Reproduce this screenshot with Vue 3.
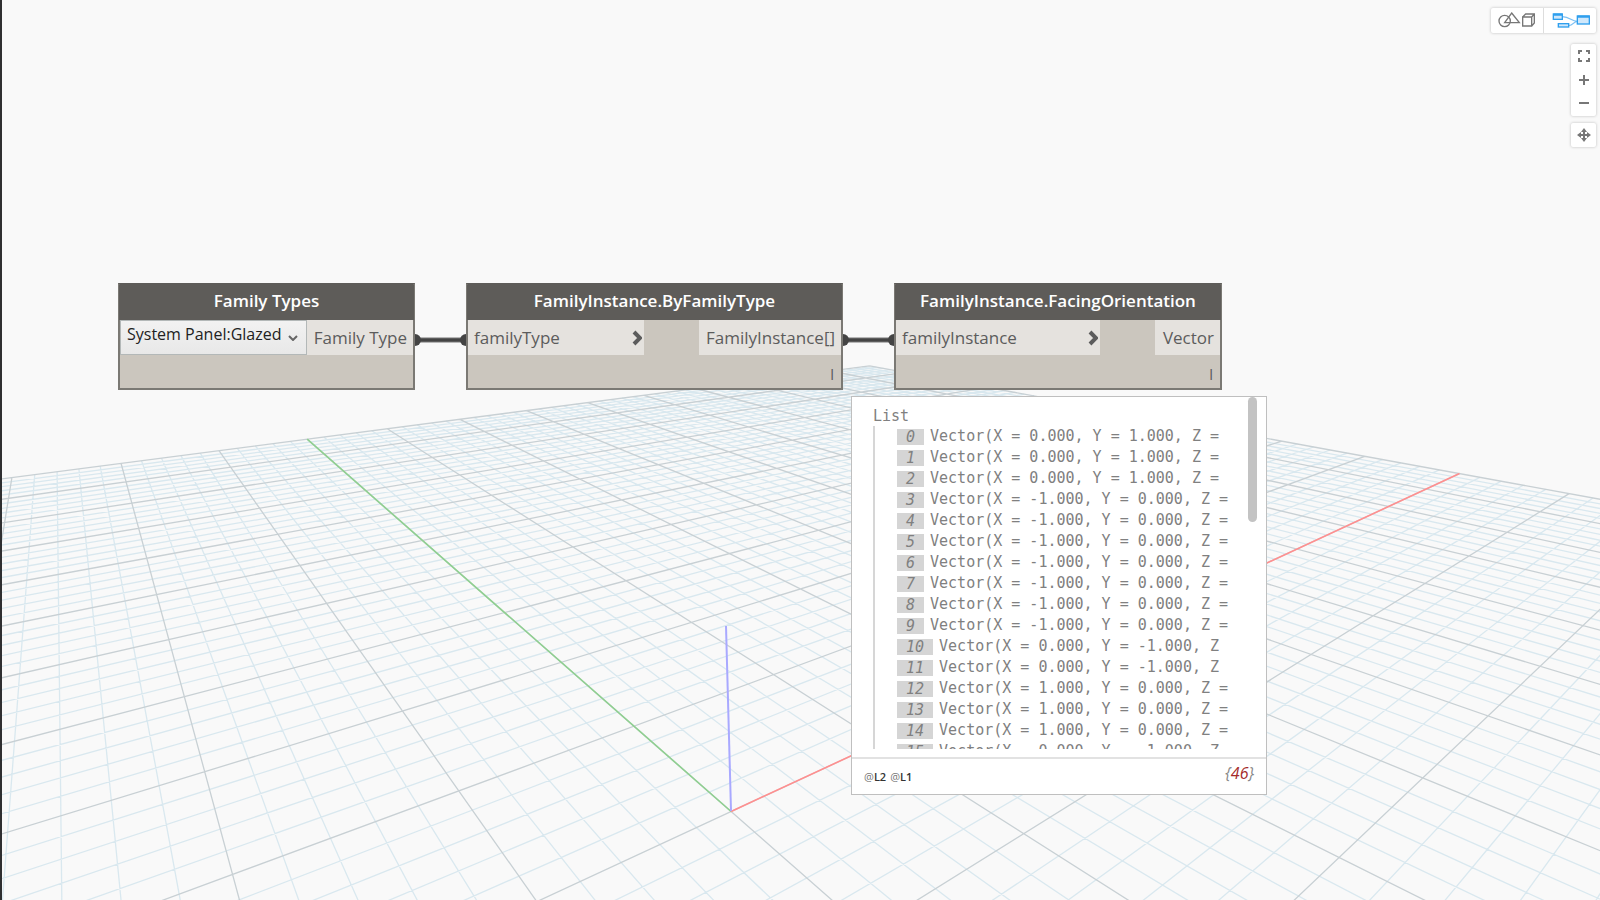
<script setup>
import { ref } from 'vue'

const familyType = ref('System Panel:Glazed')

// Perspective projection of the ground plane: (u, v) = 1 is the far end of each axis.
const cam = {
  a: 2649.5, b: 90.9, c: 731.1,
  d: 285.5, e: 363.7, f: 811.5,
  g: 1.3163, h: 1.6758
}
const NEAR = 0.1
const depth = (u, v) => cam.g * u + cam.h * v + 1

function project(u, v) {
  const w = depth(u, v)
  const x = (cam.a * u + cam.b * v + cam.c) / w
  const y = (cam.d * u + cam.e * v + cam.f) / w
  return x.toFixed(1) + ' ' + y.toFixed(1)
}

function segment(u0, v0, u1, v1) {
  const w0 = depth(u0, v0)
  const w1 = depth(u1, v1)
  if (w0 < NEAR && w1 < NEAR) return ''
  const t = (NEAR - w0) / (w1 - w0)
  const um = u0 + (u1 - u0) * t
  const vm = v0 + (v1 - v0) * t
  if (w0 < NEAR) { u0 = um; v0 = vm }
  if (w1 < NEAR) { u1 = um; v1 = vm }
  return 'M' + project(u0, v0) + 'L' + project(u1, v1)
}

let minor = ''
let major = ''
for (let i = -50; i <= 50; i++) {
  const k = i / 50
  const pair = segment(k, -1, k, 1) + segment(-1, k, 1, k)
  if (i % 5 === 0) major += pair
  else minor += pair
}

const axes = [
  { name: 'green', d: segment(0, 0, 0, 1) },
  { name: 'red', d: segment(0, 0, 1, 0) },
  { name: 'blue', d: 'M731 811L726 626' }
]

const nodes = [
  { title: 'Family Types', x: 118, width: 297, select: true, output: 'Family Type', outWidth: 106 },
  { title: 'FamilyInstance.ByFamilyType', x: 466, width: 377, input: 'familyType', output: 'FamilyInstance[]', outWidth: 142, lacing: true },
  { title: 'FamilyInstance.FacingOrientation', x: 894, width: 328, input: 'familyInstance', output: 'Vector', outWidth: 65, lacing: true }
]

const wires = [
  { from: 415, to: 466 },
  { from: 843, to: 894 }
]

const up = 'Vector(X = 0.000, Y = 1.000, Z ='
const left = 'Vector(X = -1.000, Y = 0.000, Z ='
const down = 'Vector(X = 0.000, Y = -1.000, Z'
const right = 'Vector(X = 1.000, Y = 0.000, Z ='
const items = [up, up, up, left, left, left, left, left, left, left, down, down, right, right, right, down]
</script>

<template>
  <main class="workspace">
    <svg class="scene" viewBox="0 0 1600 900" preserveAspectRatio="xMidYMid slice" aria-hidden="true">
      <path class="minor" :d="minor" />
      <path class="major" :d="major" />
      <path v-for="axis in axes" :key="axis.name" class="axis" :class="axis.name" :d="axis.d" />
    </svg>

    <svg class="wires" aria-hidden="true">
      <g v-for="wire in wires" :key="wire.from">
        <path class="wire-edge" :d="`M${wire.from} 340H${wire.to}`" />
        <path class="wire" :d="`M${wire.from} 340H${wire.to}`" />
        <circle :cx="wire.from" cy="340" r="6" />
        <circle :cx="wire.to" cy="340" r="6" />
      </g>
    </svg>

    <section
      v-for="node in nodes"
      :key="node.title"
      class="node"
      :style="{ left: node.x + 'px', width: node.width + 'px' }"
    >
      <h2>{{ node.title }}</h2>
      <div class="ports">
        <div v-if="node.select" class="picker">
          <select v-model="familyType" aria-label="Family type">
            <option>System Panel:Glazed</option>
          </select>
          <svg viewBox="0 0 10 6" width="10" height="6" aria-hidden="true"><path d="M1 1L5 5L9 1" /></svg>
        </div>
        <div v-else class="port input">
          <span>{{ node.input }}</span>
          <svg viewBox="0 0 10 16" width="10" height="16" aria-hidden="true"><path d="M2 2L8 8L2 14" /></svg>
        </div>
        <div class="port output" :style="{ width: node.outWidth + 'px' }">{{ node.output }}</div>
      </div>
      <div class="foot"><span v-if="node.lacing">l</span></div>
    </section>

    <section class="preview">
      <div class="preview-body">
        <div class="tree">
          <div class="root">List</div>
          <ol>
            <li v-for="(item, i) in items" :key="i"><i>{{ i }}</i><span>{{ item }}</span></li>
          </ol>
        </div>
        <div class="thumb"></div>
      </div>
      <footer>
        <span class="levels"><span>@<b>L2</b></span><span>@<b>L1</b></span></span>
        <em>{<b>46</b>}</em>
      </footer>
    </section>

    <nav class="tools">
      <div class="group modes">
        <button type="button" aria-label="3D preview navigation">
          <svg class="geometry" viewBox="93 24 156 75" width="52" height="25">
            <circle cx="134" cy="63" r="17" />
            <path d="M155 39L178 68H134Z" />
            <path d="M188 51H215V78H188ZM188 51L197 42H223V69L215 78M215 51L223 42" />
          </svg>
        </button>
        <button type="button" aria-label="Graph view">
          <svg class="graph" viewBox="252 24 156 75" width="52" height="25">
            <path class="link" d="M307 50C330 51 334 63 352 64M326 77C340 76 340 65 352 64" />
            <rect x="280" y="42" width="27" height="16" />
            <rect x="295" y="71" width="31" height="10" />
            <rect x="352" y="48" width="36" height="24" />
            <path class="bar" d="M280 44H307M352 50H388" />
          </svg>
        </button>
      </div>
      <div class="group">
        <button type="button" aria-label="Zoom to fit">
          <svg viewBox="0 0 24 24" width="24" height="24"><path d="M7 10V7H10M14 7H17V10M17 14V17H14M10 17H7V14" /></svg>
        </button>
        <button type="button" aria-label="Zoom in">
          <svg viewBox="0 0 24 24" width="24" height="24"><path d="M12 7V17M7 12H17" /></svg>
        </button>
        <button type="button" aria-label="Zoom out">
          <svg viewBox="0 0 24 24" width="24" height="24"><path d="M7 11H17" /></svg>
        </button>
      </div>
      <div class="group">
        <button type="button" aria-label="Pan">
          <svg viewBox="0 0 24 24" width="24" height="24">
            <path d="M12 7V17M7 12H17" />
            <path class="heads" d="M12 5L15 9H9ZM12 19L15 15H9ZM5 12L9 9V15ZM19 12L15 9V15Z" />
          </svg>
        </button>
      </div>
    </nav>
  </main>
</template>

<style>
body {
  margin: 0;
  background: #f9f9f9;
}
</style>

<style scoped>
* {
  box-sizing: border-box;
}
.workspace {
  position: relative;
  height: 100vh;
  overflow: hidden;
  border-left: 2px solid #2f2f31;
  background: #f9f9f9;
  font-family: "Open Sans", "Noto Sans", sans-serif;
  color: #5c5c5c;
}
.scene,
.wires {
  position: absolute;
  inset: 0 0 0 -2px;
  width: calc(100% + 2px);
  height: 100%;
  clip-path: inset(0 0 0 2px);
  fill: none;
}
.minor {
  stroke: #d9e8ef;
  stroke-width: 1.3;
}
.major {
  stroke: #c8d0d4;
  stroke-width: 1.3;
}
.axis {
  stroke-width: 1.6;
}
.axis.green { stroke: #8fcf90; }
.axis.red { stroke: #ff8f8f; }
.axis.blue { stroke: #a9a9ff; stroke-width: 2; }

.wire { stroke: #444; stroke-width: 3; }
.wire-edge { stroke: #777; stroke-width: 5; }
.wires circle { fill: #444; }

.node {
  position: absolute;
  top: 283px;
  margin-left: -2px;
  border: 2px solid #7b7974;
  border-top-color: #5e5c59;
  background: #cbc6be;
}
.node h2 {
  margin: 0 -1px;
  height: 35px;
  background: #5e5c59;
  color: #fff;
  font-size: 17px;
  font-weight: 600;
  line-height: 31px;
  text-align: center;
  white-space: nowrap;
}
.ports {
  display: flex;
  height: 35px;
  font-size: 17px;
  line-height: 35px;
  white-space: nowrap;
}
.port {
  background: #e5e2de;
}
.input {
  display: flex;
  flex: 1;
  justify-content: space-between;
  align-items: center;
  margin-right: 55px;
  padding: 0 2px 0 6px;
}
.input svg {
  fill: none;
  stroke: #5c5c5c;
  stroke-width: 4;
}
.output {
  padding-right: 6px;
  text-align: right;
}
.picker {
  position: relative;
  flex: 1;
}
.picker select {
  display: block;
  width: 100%;
  height: 35px;
  padding: 0 16px 8px 6px;
  appearance: none;
  border: 1px solid #b3b8b8;
  border-radius: 0;
  background: linear-gradient(#f2f2f2, #e8e8e8);
  color: #222;
  font: 16px/24px "Open Sans", "Noto Sans", sans-serif;
}
.picker svg {
  position: absolute;
  right: 9px;
  top: 15px;
  fill: none;
  stroke: #666;
  stroke-width: 2;
  pointer-events: none;
}
.foot {
  height: 33px;
  padding-right: 7px;
  font-size: 15px;
  line-height: 38px;
  text-align: right;
}

.preview {
  position: absolute;
  left: 849px;
  top: 396px;
  width: 416px;
  border: 1px solid #bfbfbf;
  background: #fff;
}
.preview-body {
  display: flex;
  height: 362px;
  padding: 0 9px 8px 21px;
  border-bottom: 2px solid #e2e2e2;
}
.tree {
  flex: 1;
  margin-right: 15px;
  padding-top: 9px;
  overflow: hidden;
  color: #808080;
  font: 15px/21px "DejaVu Sans Mono", "Liberation Mono", monospace;
  white-space: nowrap;
}
.root {
  height: 20px;
}
.tree ol {
  margin: 0;
  padding: 0 0 0 22px;
  border-left: 2px solid #d6d6d6;
  list-style: none;
}
.tree li {
  display: flex;
  align-items: center;
  gap: 6px;
  height: 21px;
}
.tree i {
  height: 16px;
  padding: 0 9px;
  background: #d5d5d5;
  line-height: 16px;
}
.thumb {
  width: 9px;
  height: 125px;
  border-radius: 5px;
  background: #c3c3c3;
}
footer {
  display: flex;
  justify-content: space-between;
  height: 35px;
  padding: 0 12px;
}
.levels {
  display: flex;
  gap: 4px;
  padding-top: 8px;
  font-size: 11px;
  line-height: 20px;
  color: #777;
}
.levels b {
  color: #333;
  font-weight: 600;
}
footer em {
  font-size: 16px;
  line-height: 28px;
  color: #888;
}
footer em b {
  color: #a52a2a;
  font-weight: 400;
}

.tools {
  position: absolute;
  top: 8px;
  right: 4px;
  display: flex;
  flex-direction: column;
  align-items: flex-end;
}
.group {
  display: flex;
  flex-direction: column;
  align-items: flex-end;
  width: 25px;
  margin-bottom: 7px;
  border-radius: 2px;
  background: #fff;
  box-shadow: 0 0 3px #bbb;
}
.modes {
  flex-direction: row;
  width: auto;
  margin-bottom: 11px;
}
.modes button + button {
  border-left: 1px solid #ddd;
}
.tools button {
  display: block;
  padding: 0;
  border: 0;
  background: none;
}
.tools svg {
  display: block;
  fill: none;
  stroke: #777;
  stroke-width: 2;
}
.tools .geometry {
  stroke-width: 4;
}
.tools .graph {
  stroke: #2f9fee;
  stroke-width: 4;
}
.graph rect {
  fill: #d0e8fb;
}
.graph .bar {
  stroke-width: 7;
}
.graph .link {
  stroke: #7cc0f3;
}
.tools .heads {
  fill: #777;
  stroke: none;
}
</style>
